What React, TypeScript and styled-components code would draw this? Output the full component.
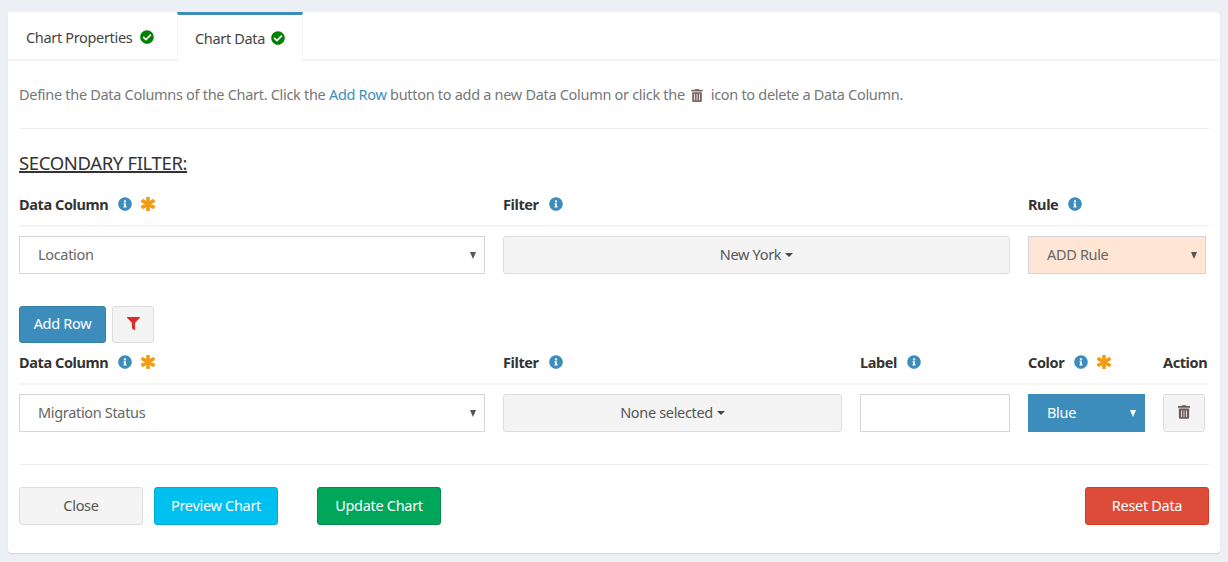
import React from "react";
import styled, { createGlobalStyle } from "styled-components";
import { FaCheckCircle, FaInfoCircle, FaAsterisk, FaTrashAlt, FaFilter } from "react-icons/fa";

const Global = createGlobalStyle`
  html, body { margin: 0; padding: 0; background: #ecf0f5; }
  body { font-family: "Noto Sans", "Liberation Sans", sans-serif; font-size: 14px; color: #444; }
  * { box-sizing: border-box; }
`;

const Page = styled.div`
  padding: 12px 8px 9px;
  height: 562px;
  overflow: hidden;
`;
const Card = styled.div`
  background: #fff;
  border-radius: 4px;
  height: 541px;
  box-shadow: 0 1px 1px rgba(0, 0, 0, 0.1);
`;
const TabBar = styled.div`
  display: flex;
  height: 49px;
  border-bottom: 2px solid #f4f4f4;
`;
const Tab = styled.div<{ $active?: boolean; $w: number }>`
  width: ${(p) => p.$w}px;
  height: ${(p) => (p.$active ? 49 : 47)}px;
  display: flex;
  align-items: center;
  gap: ${(p) => (p.$active ? 6 : 8)}px;
  padding: ${(p) => (p.$active ? "0 0 0 17px" : "3px 0 0 18px")};
  background: #fff;
  color: #444;
  border-top: ${(p) => (p.$active ? "3px solid #3c8dbc" : "0")};
  border-left: ${(p) => (p.$active ? "1px solid #f4f4f4" : "0")};
  border-right: ${(p) => (p.$active ? "1px solid #f4f4f4" : "0")};
  letter-spacing: -0.33px;
  font-size: 14.5px;
  svg { color: #008000; width: 14px; height: 14px; }
`;
const Body = styled.div`
  padding: 0 11px;
`;
const Intro = styled.div`
  height: 68px;
  padding-top: 23px;
  line-height: 20px;
  border-bottom: 1px solid #eee;
  color: #777;
  font-size: 14.5px;
  letter-spacing: -0.3px;
  white-space: nowrap;
  a { color: #3c8dbc; text-decoration: none; }
  svg { color: #7a6a66; width: 12px; height: 13px; margin: 0 4px 0 3px; vertical-align: -2px; }
`;
const Heading = styled.h4`
  margin: 0;
  padding-top: 23px;
  height: 63px;
  font-size: 18.5px;
  line-height: 22px;
  font-weight: 400;
  color: #333;
  letter-spacing: -0.36px;
  text-decoration: underline;
  text-decoration-thickness: 1.5px;
`;
const Grid = styled.div<{ $cols: string }>`
  display: grid;
  grid-template-columns: ${(p) => p.$cols};
`;
const HeadCell = styled.div`
  height: 35px;
  display: flex;
  align-items: flex-start;
  gap: 9px;
  padding-top: 2px;
  border-bottom: 2px solid #f4f4f4;
  font-weight: 700;
  font-size: 14.5px;
  line-height: 20px;
  letter-spacing: -0.4px;
  color: #333;
  white-space: nowrap;
`;
const Info = styled(FaInfoCircle)`
  color: #3c8dbc;
  width: 14px;
  height: 14px;
  margin: 3px 0 0 1px;
  flex: none;
`;
const Star = styled(FaAsterisk)`
  color: #f39c12;
  width: 14px;
  height: 14px;
  margin: 3px 0 0 0;
  flex: none;
  stroke: currentColor;
  stroke-width: 45;
`;
const BodyCell = styled.div`
  padding-top: 9px;
`;
const Select = styled.div<{ $w: number; $bg?: string; $fg?: string; $arrow?: string; $noBorder?: boolean }>`
  position: relative;
  width: ${(p) => p.$w}px;
  height: 38px;
  display: flex;
  align-items: center;
  padding: 0 0 2px 18px;
  background: ${(p) => p.$bg || "#fff"};
  color: ${(p) => p.$fg || "#666"};
  border: 1px solid ${(p) => (p.$noBorder ? "transparent" : "#d2d6de")};
  font-size: 14.5px;
  letter-spacing: -0.33px;
  &::after {
    content: "";
    position: absolute;
    right: 8px;
    top: 15px;
    border-left: 3.5px solid transparent;
    border-right: 3.5px solid transparent;
    border-top: 7px solid ${(p) => p.$arrow || "#555"};
  }
`;
const Multi = styled.div<{ $w: number }>`
  width: ${(p) => p.$w}px;
  height: 38px;
  display: flex;
  align-items: center;
  justify-content: center;
  gap: 4px;
  padding-bottom: 2px;
  background: #f4f4f4;
  border: 1px solid #ddd;
  border-radius: 3px;
  color: #555;
  font-size: 14.5px;
  letter-spacing: -0.33px;
  &::after {
    content: "";
    border-left: 4px solid transparent;
    border-right: 4px solid transparent;
    border-top: 4px solid #444;
    margin-top: 2px;
  }
`;
const TextBox = styled.div<{ $w: number }>`
  width: ${(p) => p.$w}px;
  height: 38px;
  border: 1px solid #d2d6de;
  background: #fff;
`;
const Btn = styled.button<{ $w: number; $h?: number; $bg?: string; $bd?: string; $fg?: string }>`
  width: ${(p) => p.$w}px;
  height: ${(p) => p.$h || 38}px;
  padding: 0 0 3px;
  display: inline-flex;
  align-items: center;
  justify-content: center;
  background: ${(p) => p.$bg || "#f4f4f4"};
  border: 1px solid ${(p) => p.$bd || "#ddd"};
  border-radius: 3px;
  color: ${(p) => p.$fg || "#444"};
  font-family: inherit;
  font-size: 14.5px;
  letter-spacing: -0.3px;
`;
const ToolRow = styled.div`
  display: flex;
  gap: 6px;
  padding-top: 32px;
  height: 76px;
`;
const Footer = styled.div`
  display: flex;
  margin-top: 32px;
  padding-top: 22px;
  border-top: 1px solid #eee;
`;
const FilterIcon = styled(FaFilter)`
  color: #dd2c2c;
  width: 13px;
  height: 13px;
`;
const TrashIcon = styled(FaTrashAlt)`
  color: #6b5b58;
  width: 12px;
  height: 14px;
`;
const Spacer = styled.div`
  flex: 1;
`;
const Gap = styled.div<{ $w: number }>`
  width: ${(p) => p.$w}px;
`;

export default function App() {
  return (
    <Page>
      <Global />
      <Card>
        <TabBar>
          <Tab $w={169}>Chart Properties <FaCheckCircle /></Tab>
          <Tab $w={126} $active>Chart Data <FaCheckCircle /></Tab>
        </TabBar>
        <Body>
          <Intro>
            Define the Data Columns of the Chart. Click the <a href="#">Add Row</a> button to add a new Data Column or click the <FaTrashAlt /> icon to delete a Data Column.
          </Intro>
          <Heading>SECONDARY FILTER:</Heading>
          <Grid $cols="484px 525px 181px">
            <HeadCell>Data Column <Info /><Star /></HeadCell>
            <HeadCell>Filter <Info /></HeadCell>
            <HeadCell>Rule <Info /></HeadCell>
            <BodyCell><Select $w={466}>Location</Select></BodyCell>
            <BodyCell><Multi $w={507}>New York</Multi></BodyCell>
            <BodyCell><Select $w={178} $bg="#ffe5d3">ADD Rule</Select></BodyCell>
          </Grid>
          <ToolRow>
            <Btn $w={87} $h={37} $bg="#3c8dbc" $bd="#367fa9" $fg="#fff">Add Row</Btn>
            <Btn $w={42} $h={37}><FilterIcon /></Btn>
          </ToolRow>
          <Grid $cols="484px 357px 168px 135px 46px">
            <HeadCell>Data Column <Info /><Star /></HeadCell>
            <HeadCell>Filter <Info /></HeadCell>
            <HeadCell>Label <Info /></HeadCell>
            <HeadCell>Color <Info /><Star /></HeadCell>
            <HeadCell>Action</HeadCell>
            <BodyCell><Select $w={466}>Migration Status</Select></BodyCell>
            <BodyCell><Multi $w={339}>None selected</Multi></BodyCell>
            <BodyCell><TextBox $w={150} /></BodyCell>
            <BodyCell><Select $w={117} $bg="#3c8dbc" $fg="#fff" $arrow="#fff" $noBorder>Blue</Select></BodyCell>
            <BodyCell><Btn $w={42}><TrashIcon /></Btn></BodyCell>
          </Grid>
          <Footer>
            <Btn $w={124} $fg="#555">Close</Btn>
            <Gap $w={11} />
            <Btn $w={124} $bg="#00c0ef" $bd="#00acd6" $fg="#fff">Preview Chart</Btn>
            <Gap $w={39} />
            <Btn $w={124} $bg="#00a65a" $bd="#008d4c" $fg="#fff">Update Chart</Btn>
            <Spacer />
            <Btn $w={124} $bg="#dd4b39" $bd="#d73925" $fg="#fff">Reset Data</Btn>
          </Footer>
        </Body>
      </Card>
    </Page>
  );
}
